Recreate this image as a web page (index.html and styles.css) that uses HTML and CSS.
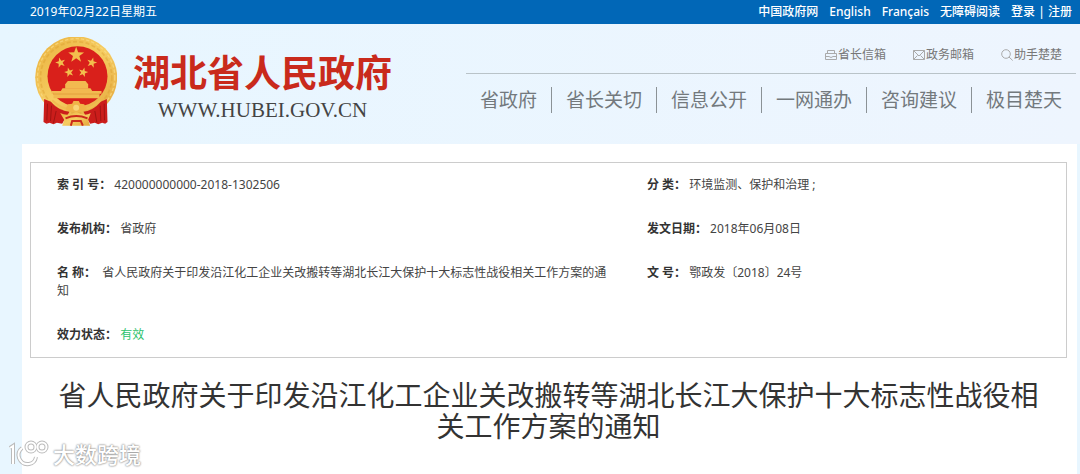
FILE: index.html
```html
<!DOCTYPE html>
<html lang="zh-CN">
<head>
  <meta charset="UTF-8" />
  <title>湖北省人民政府</title>
  <link rel="stylesheet" href="styles.css">
</head>
<body>

<div class="topbar">
  <span>2019年02月22日星期五</span>
  <nav class="topbar-links">
    <a href="#">中国政府网</a>
    <a href="#">English</a>
    <a href="#">Français</a>
    <a href="#">无障碍阅读</a>
    <span><a href="#">登录</a> | <a href="#">注册</a></span>
  </nav>
</div>

<header class="header">
  <a class="brand" href="#">
    <svg class="emblem" viewBox="27 22 246 270" aria-hidden="true">
      <defs>
        <linearGradient id="gold" x1="0" y1="0" x2="1" y2="1">
          <stop offset="0" stop-color="#e9b03c"/>
          <stop offset="0.5" stop-color="#f6cd62"/>
          <stop offset="1" stop-color="#e3a53a"/>
        </linearGradient>
        <polygon id="star" points="0,-10 2.4,-3.2 9.5,-3.1 3.8,1.2 5.9,8.1 0,4 -5.9,8.1 -3.8,1.2 -9.5,-3.1 -2.4,-3.2"/>
      </defs>
      <!-- wreath -->
      <circle cx="152" cy="143" r="123" fill="url(#gold)"/>
      <circle cx="152" cy="143" r="107" fill="none" stroke="#d99a2c" stroke-width="5" stroke-dasharray="12 7" opacity="0.4"/>
      <circle cx="152" cy="143" r="116" fill="none" stroke="#f9dc86" stroke-width="4" stroke-dasharray="10 6" opacity="0.7"/>
      <circle cx="156" cy="140" r="90" fill="#d9201b"/>
      <!-- stars -->
      <g fill="#f3bf4d">
        <use href="#star" transform="translate(152 76) scale(2.5)"/>
        <use href="#star" transform="translate(105 99) rotate(-15) scale(1.6)"/>
        <use href="#star" transform="translate(199 99) rotate(15) scale(1.6)"/>
        <use href="#star" transform="translate(131 128) rotate(-15) scale(1.5)"/>
        <use href="#star" transform="translate(173 128) rotate(15) scale(1.5)"/>
      </g>
      <!-- gate -->
      <g fill="#f2b950">
        <path d="M127 154h53l8 10h-69z"/>
        <path d="M119 163h69v14h-69z"/>
        <path d="M111 176h84l5 8h-94z"/>
        <path d="M78 184h150v8h-6v14H84v-14h-6z"/>
      </g>
      <path d="M84 193h137" stroke="#dd9634" stroke-width="2"/>
      <!-- ribbon -->
      <path d="M56 208l20 8q22 26 56 30l-12 20 -10 16 -16-3 -10 5 -12-5 -9 3 -9-5z" fill="#cb1d1b"/>
      <path d="M244 208l-18 8q-22 26-52 30l10 20 10 16 14-3 10 5 12-5 9 3 7-5z" fill="#cb1d1b"/>
      <path d="M66 222l-2 50M78 228l-3 46M92 244l-8 36M236 222l1 50M224 228l2 46M208 244l6 34" stroke="#a01412" stroke-width="3" fill="none"/>
      <path d="M104 250q24 12 48-4 24 16 44 4l-8 20 6 18h-84l6-18z" fill="url(#gold)"/>
      <path d="M120 266q32-14 66 0M136 288l4-14h26l6 14" stroke="#cb2a1b" stroke-width="6" fill="none"/>
      <path d="M80 212q34 32 62 24M224 212q-32 32-62 24" stroke="#f0bd52" stroke-width="6" fill="none"/>
      <path d="M120 238l8-14 12-2 4-8h16l4 8 12 2 8 14 -16 10h-34z" fill="#f0b548"/>
      <circle cx="152" cy="234" r="9" fill="#f9d678"/>
    </svg>
    <span class="brand-text">
      <strong class="brand-name">湖北省人民政府</strong>
      <span class="brand-url">WWW.HUBEI.GOV.CN</span>
    </span>
  </a>

  <div class="header-nav">
    <div class="tools">
      <a href="#">
        <svg class="icon" viewBox="0 0 12 12"><path d="M2.5 4.5v-3h7v3M.5 4.5h11v6H.5zM.5 7.500h3.500q2 2 4 0h3.500"/></svg>省长信箱</a>
      <a href="#">
        <svg class="icon" viewBox="0 0 12 12"><path d="M.5 1.500h11v9H.5zM.5 1.500L6 7l5.500-5.500M.5 10.500l4-4M11.500 10.500l-4-4"/></svg>政务邮箱</a>
      <a href="#">
        <svg class="icon" viewBox="0 0 12 12"><circle cx="5" cy="5" r="4.300"/><path d="M8 8l3.700 3.500"/></svg>助手楚楚</a>
    </div>
    <nav class="menu">
      <a href="#">省政府</a>
      <a href="#">省长关切</a>
      <a href="#">信息公开</a>
      <a href="#">一网通办</a>
      <a href="#">咨询建议</a>
      <a href="#">极目楚天</a>
    </nav>
  </div>
</header>

<main class="content">
  <table class="info">
    <tbody>
      <tr>
        <td><strong>索 引 号：</strong> 420000000000-2018-1302506</td>
        <td><strong>分 类：</strong> 环境监测、保护和治理 ;</td>
      </tr>
      <tr>
        <td><strong>发布机构：</strong> 省政府</td>
        <td><strong>发文日期：</strong> 2018年06月08日</td>
      </tr>
      <tr>
        <td><strong>名 称：</strong>&nbsp; 省人民政府关于印发沿江化工企业关改搬转等湖北长江大保护十大标志性战役相关工作方案的通知</td>
        <td><strong>文 号：</strong> 鄂政发〔2018〕24号</td>
      </tr>
      <tr>
        <td><strong>效力状态：</strong> <span class="valid">有效</span></td>
        <td></td>
      </tr>
    </tbody>
  </table>

  <h1>省人民政府关于印发沿江化工企业关改搬转等湖北长江大保护十大标志性战役相关工作方案的通知</h1>
</main>

<div class="watermark">
  <svg class="watermark-logo" viewBox="0 0 42 28" aria-hidden="true">
    <g class="logo-edge">
      <path d="M2 8l3-2v18"/>
      <path d="M14 8q-5 4-3 10 3 7 10 6 6-1 7-7"/>
      <circle cx="23" cy="7" r="4.500"/>
      <circle cx="34" cy="7" r="4.500"/>
    </g>
    <g class="logo-line">
      <path d="M2 8l3-2v18"/>
      <path d="M14 8q-5 4-3 10 3 7 10 6 6-1 7-7"/>
      <circle cx="23" cy="7" r="4.500"/>
      <circle cx="34" cy="7" r="4.500"/>
    </g>
  </svg>
  <span>大数跨境</span>
</div>

</body>
</html>
```
FILE: styles.css
```css
* {
  box-sizing: border-box;
}
body {
  margin: 0;
  min-height: 100vh;
  background: #e8f6ff;
  color: #444;
  font-family: "Noto Sans", "Noto Sans CJK SC", sans-serif;
  font-size: 12px;
  line-height: 18px;
}
a {
  color: inherit;
  text-decoration: none;
}

/* top bar */
.topbar {
  display: flex;
  justify-content: space-between;
  align-items: center;
  height: 24px;
  padding: 0 8px 0 30px;
  background: #0167b7;
  color: #fff;
}
.topbar-links {
  display: flex;
  gap: 11px;
  font-weight: 500;
}

/* header */
.header {
  display: flex;
  justify-content: space-between;
  height: 120px;
  padding: 0 4px 0 34px;
  background: linear-gradient(to right, #e7f6ff, #eef5fe);
}
.brand {
  display: flex;
  gap: 16px;
  padding-top: 13px;
}
.emblem {
  width: 83px;
  height: 90px;
}
.brand-text {
  display: flex;
  flex-direction: column;
  align-items: center;
  padding-top: 12px;
}
.brand-name {
  color: #c92a1c;
  font-size: 37px;
  line-height: 48px;
}
.brand-url {
  color: #444;
  font-family: "Liberation Serif", serif;
  font-size: 21px;
  line-height: 26px;
}
.header-nav {
  padding-top: 22px;
}
.tools {
  display: flex;
  justify-content: flex-end;
  gap: 27px;
  padding: 0 14px 9px;
  border-bottom: 1px solid #b9c3c8;
  color: #777;
}
.tools a {
  display: flex;
  align-items: center;
  gap: 1px;
}
.icon {
  width: 12px;
  height: 12px;
  fill: none;
  stroke: #aaa;
  stroke-width: 1;
}
.menu {
  display: flex;
  padding-top: 13px;
  color: #73797d;
  font-size: 19px;
  line-height: 26px;
}
.menu a {
  padding: 0 14px;
  border-right: 1px solid #8b9296;
}
.menu a:last-child {
  border-right: none;
}

/* document */
.content {
  min-height: calc(100vh - 144px);
  margin: 0 3px 0 22px;
  padding: 18px 10px 0 8px;
  background: #fff;
}
.info {
  width: 100%;
  border: 1px solid #ccc;
  border-spacing: 0;
  table-layout: fixed;
}
.info td {
  padding: 13px 8px 13px 26px;
  vertical-align: top;
}
.info td:first-child {
  width: 57%;
}
.info strong {
  color: #333;
}
.info .valid {
  color: #2dc26b;
}
h1 {
  margin: 22px 20px 0;
  color: #333;
  font-size: 28px;
  font-weight: 400;
  line-height: 31px;
  text-align: center;
}

/* watermark over the page */
.watermark {
  position: absolute;
  left: 8px;
  bottom: 6px;
  display: flex;
  align-items: center;
  gap: 3px;
  color: #fff;
  font-size: 22px;
  font-weight: 500;
  line-height: 28px;
  text-shadow: 0 0 2px #888, 0 0 2px #999;
}
.watermark-logo {
  width: 42px;
  height: 28px;
  fill: none;
}
.logo-edge {
  stroke: #bbb;
  stroke-width: 4;
}
.logo-line {
  stroke: #fff;
  stroke-width: 2;
}
```
